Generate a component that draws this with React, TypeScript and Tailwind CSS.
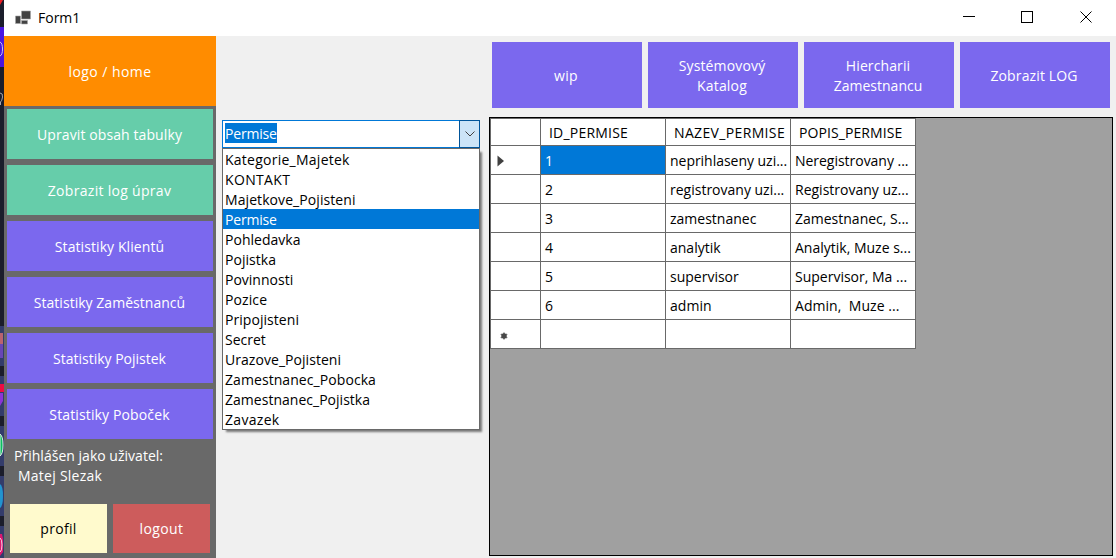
const tables = [
  { name: 'Kategorie_Majetek', spacing: 'tracking-[0.25px]' },
  { name: 'KONTAKT', spacing: 'tracking-[0.35px]' },
  { name: 'Majetkove_Pojisteni', spacing: 'tracking-[0.08px]' },
  { name: 'Permise', spacing: 'tracking-[-0.2px]' },
  { name: 'Pohledavka', spacing: 'tracking-[0.02px]' },
  { name: 'Pojistka', spacing: 'tracking-[0.05px]' },
  { name: 'Povinnosti', spacing: 'tracking-[0px]' },
  { name: 'Pozice', spacing: 'tracking-[0.1px]' },
  { name: 'Pripojisteni', spacing: 'tracking-[0.05px]' },
  { name: 'Secret', spacing: 'tracking-[0px]' },
  { name: 'Urazove_Pojisteni', spacing: 'tracking-[0.05px]' },
  { name: 'Zamestnanec_Pobocka', spacing: 'tracking-[0.07px]' },
  { name: 'Zamestnanec_Pojistka', spacing: 'tracking-[0.02px]' },
  { name: 'Zavazek', spacing: 'tracking-[0.3px]' },
];

const headers = [
  { name: '', spacing: '' },
  { name: 'ID_PERMISE', spacing: 'tracking-[0.2px]' },
  { name: 'NAZEV_PERMISE', spacing: 'tracking-[0.35px]' },
  { name: 'POPIS_PERMISE', spacing: 'tracking-[0.08px]' },
];

const rows = [
  { cells: ['1', 'neprihlaseny uzi...', 'Neregistrovany ...'], spacing: 'tracking-[-0.03px]' },
  { cells: ['2', 'registrovany uzi...', 'Registrovany uz...'], spacing: 'tracking-[0px]' },
  { cells: ['3', 'zamestnanec', 'Zamestnanec, S...'], spacing: 'tracking-[0px]' },
  { cells: ['4', 'analytik', 'Analytik, Muze s...'], spacing: 'tracking-[0px]' },
  { cells: ['5', 'supervisor', 'Supervisor, Ma ...'], spacing: 'tracking-[0px]' },
  { cells: ['6', 'admin', 'Admin,\u00a0 Muze ...'], spacing: 'tracking-[0.05px]' },
  { cells: ['', '', ''], spacing: '' },
];

const sideButtons = [
  { label: 'Upravit obsah tabulky', style: 'bg-[#66cdaa] tracking-[0.1px]' },
  { label: 'Zobrazit log úprav', style: 'bg-[#66cdaa] tracking-[0.3px]' },
  { label: 'Statistiky Klientů', style: 'bg-[#7b68ee] tracking-[0.08px]' },
  { label: 'Statistiky Zaměstnanců', style: 'bg-[#7b68ee] tracking-[0.03px]' },
  { label: 'Statistiky Pojistek', style: 'bg-[#7b68ee] tracking-[0px]' },
  { label: 'Statistiky Poboček', style: 'bg-[#7b68ee] tracking-[0.13px]' },
];

const topButtons = [
  [{ text: 'wip', spacing: 'tracking-[0.3px]' }],
  [{ text: 'Systémovový', spacing: 'tracking-[0.15px]' }, { text: 'Katalog', spacing: 'tracking-[0.2px]' }],
  [{ text: 'Hiercharii', spacing: 'tracking-[0.1px]' }, { text: 'Zamestnancu', spacing: 'tracking-[0px]' }],
  [{ text: 'Zobrazit LOG', spacing: 'tracking-[0.13px]' }],
];

function DesktopStrip() {
  return (
    <svg className="h-[558px] w-1 shrink-0" viewBox="0 0 4 558">
      <rect width="4" height="558" fill="#1b1d2b" />
      <path d="M0 0h3L0 5z" fill="#ed1c24" />
      <rect y="27" width="4" height="40" fill="#4a16e0" />
      <path d="M0 42q2.500 1 2.500 7t-2.500 7" fill="none" stroke="#c9c3f0" />
      <path d="M0 93q3 0 2.500 4t-2 5v3" fill="none" stroke="#a5a6ad" />
      <g fill="#333c6b">
        <rect y="326" width="4" height="40" />
        <rect y="376" width="4" height="40" />
        <rect y="426" width="4" height="40" />
        <rect y="476" width="4" height="40" />
        <rect y="526" width="4" height="32" />
      </g>
      <rect y="333" width="3" height="11" fill="#b96370" />
      <rect y="344" width="3" height="14" fill="#6846b5" />
      <rect y="384" width="4" height="8" fill="#ed0c43" />
      <path d="M0 393h3v8L0 406z" fill="#8b35d6" />
      <path d="M0 434q3 2 3 11t-3 11z" fill="#0ac05f" stroke="#dce8e4" />
      <path d="M0 484q3 2 3 12t-3 12z" fill="#2294cf" />
      <path d="M0 534h2l1 5v13l-3 4z" fill="#dc176e" />
      <path d="M0 538q2 1 2 7t-2 7" fill="none" stroke="#f5d8e6" />
    </svg>
  );
}

function TitleBar() {
  return (
    <header className="flex h-9 shrink-0 items-center justify-between bg-white">
      <div className="flex items-center">
        <svg className="ml-[11px] h-4 w-4" viewBox="0 0 16 16" fill="#424242" stroke="#a6a6a6" strokeWidth=".6">
          <path d="M6.500 1h9v8h-9zM.5 6h5v7.500h-5zM6.500 10.500h6V14h-6z" />
        </svg>
        <span className="ml-[7px] tracking-[0px]">Form1</span>
      </div>
      <svg className="mr-[23px] h-5 w-[132px]" viewBox="0 0 132 20" fill="none" stroke="#000">
        <path d="M2 8.500h12M60.500 3.500h11v11h-11z" shapeRendering="crispEdges" />
        <path d="m119.500 3.500 11 11m0-11-11 11" />
      </svg>
    </header>
  );
}

function Sidebar() {
  return (
    <aside className="flex w-[212px] shrink-0 flex-col bg-[#696969] text-white">
      <div className="flex h-[70px] items-center justify-center bg-[#ff8c00] pt-0.5 tracking-[0.45px]">logo / home</div>
      <nav className="flex flex-col gap-1.5 p-[3px]">
        {sideButtons.map((b) => (
          <div key={b.label} className={`flex h-[50px] items-center justify-center pt-0.5 pr-px ${b.style}`}>
            {b.label}
          </div>
        ))}
      </nav>
      <div className="h-[62px] pt-1 pl-2.5">
        <div className="tracking-[0.02px]">Přihlášen jako uživatel:</div>
        <div className="pl-1 tracking-[0.25px]">Matej Slezak</div>
      </div>
      <div className="flex h-[49px] gap-1.5 px-1.5">
        <div className="flex flex-1 items-center justify-center bg-[#fffacd] tracking-[0.3px] text-black">profil</div>
        <div className="flex flex-1 items-center justify-center bg-[#cd5c5c] tracking-[0.4px]">logout</div>
      </div>
    </aside>
  );
}

function ComboBox() {
  return (
    <div className="relative mt-[84px] ml-1.5 w-[258px] shrink-0">
      <div className="flex h-7 border border-[#0078d7] bg-white">
        <div className="flex-1 pt-0.5 pl-0.5">
          <span className="block h-5 w-[52px] bg-[#0078d7] leading-[22px] text-white">Permise</span>
        </div>
        <div className="-my-px -mr-px flex w-[21px] items-center justify-center border border-[#005499] bg-[#cce4f7]">
          <svg className="h-2 w-3" viewBox="0 0 12 8" fill="none" stroke="#404040">
            <path d="m1.500 1.500 4.500 4.500 4.500-4.500" />
          </svg>
        </div>
      </div>
      <ul className="absolute top-7 left-0 h-[282px] w-[258px] border border-[#696969] bg-white leading-[22px] text-black shadow-[3px_3px_2px_-1px_rgba(0,0,0,0.5)]">
        {tables.map((t) => (
          <li key={t.name} className={`h-5 pl-0.5 ${t.spacing} ${t.name === 'Permise' ? 'bg-[#0078d7] text-white' : ''}`}>
            {t.name}
          </li>
        ))}
      </ul>
    </div>
  );
}

function DataGrid() {
  return (
    <div className="mt-[9px] h-[439px] w-[624px] border border-black bg-[#a0a0a0]">
      <div className="w-[426px] border-t border-l border-[#696969] text-black">
        <div className="grid h-[27px] grid-cols-[50px_125px_125px_125px] bg-white">
          {headers.map((h) => (
            <div key={h.name} className={`border-r border-b border-[#696969] pt-1 pl-2 whitespace-nowrap ${h.spacing}`}>{h.name}</div>
          ))}
        </div>
        {rows.map((r, i) => (
          <div key={i} className={`grid h-[29px] grid-cols-[50px_125px_125px_125px] bg-white ${r.spacing}`}>
            <div className="border-r border-b border-[#696969]">
              {i === 0 && (
                <svg className="mt-[9px] ml-1.5 h-3 w-2" viewBox="0 0 8 12"><path d="M.5.500v11L7 6z" fill="#404040" /></svg>
              )}
              {i === 6 && (
                <svg className="mt-3 ml-[9px] h-2 w-2" viewBox="0 0 8 8">
                  <path d="M4 .5v7M.8 2.200l6.400 3.600M.8 5.800l6.400-3.600" stroke="#777" strokeWidth="1.500" />
                  <circle cx="4" cy="4" r="2.700" fill="#484848" />
                </svg>
              )}
            </div>
            {r.cells.map((c, j) => (
              <div
                key={j}
                className={`border-r border-b border-[#696969] pt-[5px] pl-1 whitespace-nowrap ${i === 0 && j === 0 ? 'bg-[#0078d7] text-white' : ''}`}
              >
                {c}
              </div>
            ))}
          </div>
        ))}
      </div>
    </div>
  );
}

export default function App() {
  return (
    <div className="flex h-[558px] w-[1116px] overflow-hidden bg-[#f0f0f0] font-['Open_Sans','Noto_Sans',sans-serif] text-[14px] leading-5 tracking-[-0.2px]">
      <DesktopStrip />
      <div className="flex flex-1 flex-col">
        <TitleBar />
        <main className="flex min-h-0 flex-1">
          <Sidebar />
          <ComboBox />
          <section className="ml-[9px] pt-1.5">
            <div className="flex gap-1.5 pl-[3px]">
              {topButtons.map((lines) => (
                <div
                  key={lines[0].text}
                  className="flex h-[66px] w-[150px] flex-col items-center justify-center bg-[#7b68ee] pt-0.5 pr-0.5 text-white"
                >
                  {lines.map((l) => (
                    <span key={l.text} className={l.spacing}>{l.text}</span>
                  ))}
                </div>
              ))}
            </div>
            <DataGrid />
          </section>
        </main>
      </div>
    </div>
  );
}
